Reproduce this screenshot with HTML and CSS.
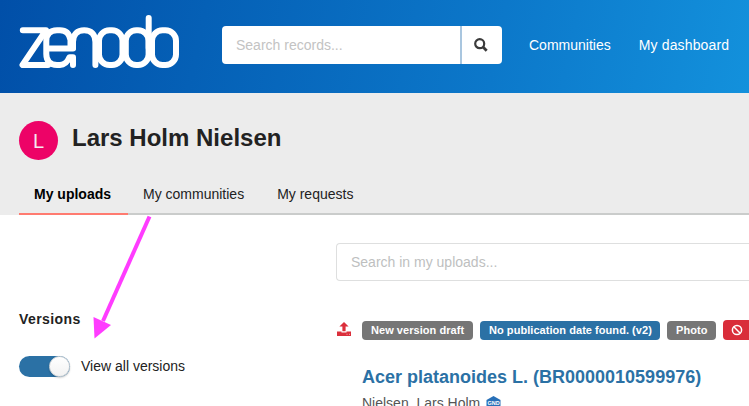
FILE: index.html
```
<!DOCTYPE html>
<html lang="en">
<head>
<meta charset="utf-8">
<title>Zenodo – My uploads</title>
<link rel="stylesheet" href="styles.css">
</head>
<body>
<header class="topbar">
  <svg class="logo" role="img" aria-label="zenodo" width="161" height="56" viewBox="19 14 161 56">
    <g fill="none" stroke="#fff" stroke-width="6" stroke-linecap="round" stroke-linejoin="round">
      <path d="M22.800 30.200H46L22.500 64.900H48"/>
      <path d="M46.300 48.400H73M73 64.900V57.200H69.500C67.500 62 65 64.900 60 64.900H57C50 64.900 46.300 61 46.300 54V41C46.300 34 50 30.200 57 30.200H60C66 30.200 69.500 34 70.500 40V48"/>
      <path d="M73 48V42C73 34 77.500 30.200 84.200 30.200S95.400 34 95.400 42V64.900"/>
      <rect x="99" y="30.200" width="23.500" height="34.700" rx="10.500"/>
      <rect x="125.800" y="30.200" width="22.800" height="34.700" rx="10.500"/>
      <path d="M148.700 18V48"/>
      <rect x="152" y="30.200" width="24" height="34.700" rx="10.500"/>
    </g>
  </svg>
  <form class="search">
    <span class="search-input">Search records...</span>
    <span class="search-button"><svg width="14" height="14" viewBox="0 0 14 14"><circle cx="5.700" cy="5.700" r="4.500" fill="none" stroke="#3b3b3b" stroke-width="2.200"/><path d="M9 9l3.700 3.700" stroke="#3b3b3b" stroke-width="2.800"/></svg></span>
  </form>
  <nav class="nav"><a class="nav-communities">Communities</a><a class="nav-dashboard">My dashboard</a></nav>
</header>
<section class="profile">
  <div class="identity"><span class="avatar">L</span><h1>Lars Holm Nielsen</h1></div>
  <nav class="tabs"><a class="tab active"><span>My uploads</span></a><a class="tab tab-communities">My communities</a><a class="tab tab-requests">My requests</a></nav>
</section>
<main class="content">
  <aside class="filters">
    <h2>Versions</h2>
    <label class="switch"><span class="track"><span class="knob"></span></span><span class="switch-text">View all versions</span></label>
  </aside>
  <section class="results">
    <div class="upload-search"><span>Search in my uploads...</span></div>
    <article class="record">
      <svg class="upload-icon" width="14" height="14" viewBox="0 0 14 14" fill="#db2f3b"><path d="M7 0l4.600 4.500H8.600V9.300H5.400V4.500H2.400z"/><path d="M0 9.500h4.500v1h5v-1H14V14H0z"/><path d="M9.500 12.300h1M12 12.300h1" stroke="#fff" stroke-width=".6"/></svg>
      <div class="record-body">
        <div class="labels"><span class="label draft"><span>New version draft</span></span><span class="label version"><span>No publication date found. (v2)</span></span><span class="label type"><span>Photo</span></span><span class="label access"><svg width="12" height="12" viewBox="0 0 12 12" fill="none" stroke="#fff" stroke-width="1.500"><circle cx="6" cy="6" r="4.600"/><path d="M2.800 2.800l6.400 6.400"/></svg></span></div>
        <h3>Acer platanoides L. (BR0000010599976)</h3>
        <div class="authors"><span>Nielsen, Lars Holm</span><svg class="gnd" width="15" height="16" viewBox="0 0 15 16"><path d="M7.500 0L14.500 4v8l-7 4-7-4V4z" fill="#2870b8"/><text x="7.500" y="9.300" text-anchor="middle">GND</text></svg></div>
      </div>
    </article>
  </section>
</main>
<svg class="pointer-arrow" width="64" height="130" viewBox="90 212 64 130"><path d="M149.500 216.500L103 321" stroke="#ff3cff" stroke-width="4"/><path d="M93.500 317l17.500 8-16.500 13.500z" fill="#ff3cff"/></svg>
</body>
</html>
```
FILE: styles.css
```
* { box-sizing: border-box; }
body { margin: 0; width: 749px; height: 406px; overflow: hidden; background: #fff; color: #222; font: 14px/20px "Liberation Sans", Arial, sans-serif; white-space: nowrap; position: relative; }
h1, h2, h3 { margin: 0; }
.topbar { height: 93px; display: flex; align-items: flex-start; padding-left: 19px; background: linear-gradient(102deg, #014fa8 0%, #0560b6 27%, #0c78ca 66%, #1391dc 100%); }
.logo { margin-top: 14px; flex: none; }
.search { display: flex; width: 280px; height: 38px; margin: 26px 0 0 42px; background: #fff; border-radius: 4px; overflow: hidden; flex: none; }
.search-input { width: 240px; padding: 9px 14px; border-right: 2px solid #a9c6df; color: #c3c3c3; }
.search-button { flex: 1; padding: 12px 0 0 12px; line-height: 0; }
.nav { display: flex; gap: 28px; margin: 35px 0 0 27px; color: #fff; }
.nav-dashboard { letter-spacing: .15px; }
.profile { height: 122px; background: #ececec; padding: 28px 0 0 19px; }
.identity { display: flex; height: 54px; }
.avatar { width: 39px; height: 39px; border-radius: 50%; background: #ed0367; color: #f6e9ef; font-size: 20px; line-height: 40px; text-align: center; }
h1 { margin-left: 14px; font-size: 24px; line-height: 34px; }
.tabs { display: flex; height: 40px; border-bottom: 2px solid #cacccb; }
.tab { height: 40px; padding: 9px 16px 9px 15px; }
.tab-requests { padding-left: 17px; }
.active { width: 109px; font-weight: bold; color: #000; border-bottom: 2px solid #ff7b70; }
.content { display: flex; }
.filters { width: 336px; flex: none; padding: 94px 0 0 19px; }
h2 { font-size: 14px; line-height: 20px; letter-spacing: .4px; }
.switch { display: flex; margin-top: 27px; }
.track { width: 51px; height: 21px; border-radius: 11px; background: #2b71a5; display: flex; justify-content: flex-end; }
.knob { width: 21px; height: 21px; border-radius: 50%; background: linear-gradient(#fff, #f2f2f2); border: 1px solid #d5d7d9; box-shadow: 0 1px 2px #0003; }
.switch-text { margin-left: 11px; }
.results { flex: none; width: 413px; }
.upload-search { height: 38px; margin-top: 28px; border: 1px solid #dedfdf; border-right: 0; border-radius: 4px 0 0 4px; padding: 8px 14px; color: #bebfbf; }
.record { display: flex; margin-top: 39px; }
.upload-icon { margin: 2px 0 0 1px; flex: none; }
.record-body { margin-left: 11px; }
.labels { display: flex; gap: 7px; height: 20px; align-items: flex-end; }
.label { height: 19px; border-radius: 4px; color: #fff; font-size: 11px; line-height: 19px; font-weight: bold; letter-spacing: .05px; padding-left: 9px; flex: none; background: #767676; }
.draft { width: 111px; }
.version { width: 180px; background: #2b71a5; }
.type { width: 49px; }
.access { width: 40px; height: 20px; background: #d92d3a; padding: 4px 0 0 8px; line-height: 0; }
h3 { margin-top: 25px; color: #2b71a5; font-size: 18px; line-height: 24px; }
.authors { display: flex; margin-top: 4px; color: #555; height: 16px; line-height: 20px; }
.gnd { margin: 3px 0 0 6px; }
.gnd text { font: bold 5.5px "Liberation Sans", sans-serif; fill: #fff; }
.pointer-arrow { position: absolute; left: 90px; top: 212px; }
```
